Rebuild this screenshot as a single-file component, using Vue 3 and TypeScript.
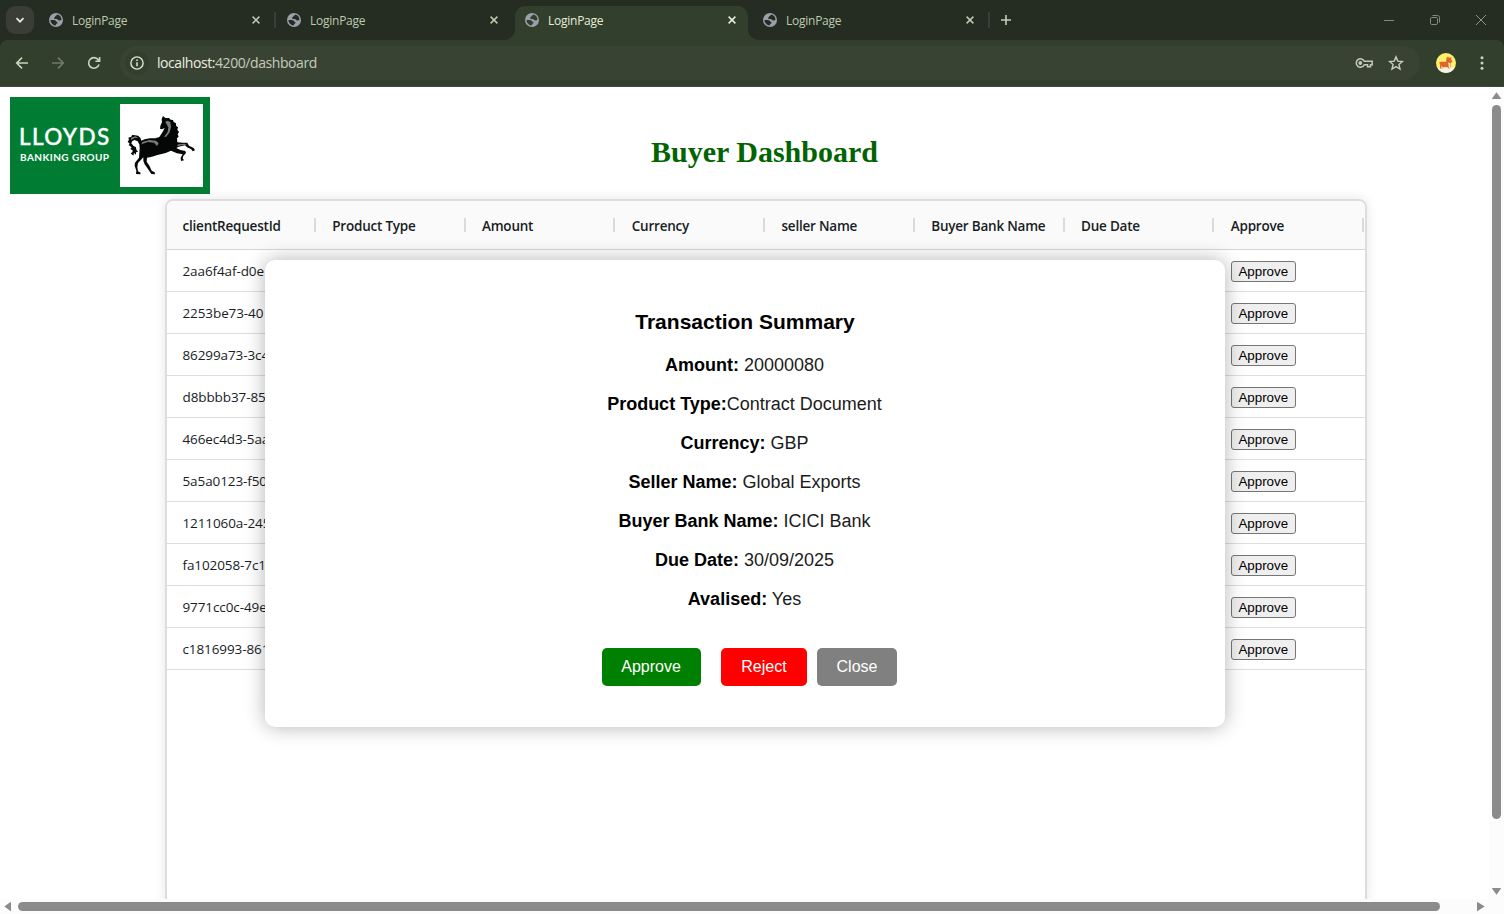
<script setup lang="ts">
interface Tab {
  title: string
  active: boolean
}

const tabs: Tab[] = [
  { title: 'LoginPage', active: false },
  { title: 'LoginPage', active: false },
  { title: 'LoginPage', active: true },
  { title: 'LoginPage', active: false },
]

const columns: string[] = [
  'clientRequestId',
  'Product Type',
  'Amount',
  'Currency',
  'seller Name',
  'Buyer Bank Name',
  'Due Date',
  'Approve',
]

const requestIds: string[] = [
  '2aa6f4af-d0e',
  '2253be73-40',
  '86299a73-3c4',
  'd8bbbb37-85',
  '466ec4d3-5aa',
  '5a5a0123-f50',
  '1211060a-245',
  'fa102058-7c1',
  '9771cc0c-49e',
  'c1816993-861',
]

const summary: { label: string; value: string }[] = [
  { label: 'Amount:', value: ' 20000080' },
  { label: 'Product Type:', value: 'Contract Document' },
  { label: 'Currency:', value: ' GBP' },
  { label: 'Seller Name:', value: ' Global Exports' },
  { label: 'Buyer Bank Name:', value: ' ICICI Bank' },
  { label: 'Due Date:', value: ' 30/09/2025' },
  { label: 'Avalised:', value: ' Yes' },
]
</script>

<template>
  <div class="window">
    <header class="tabstrip">
      <div class="tab-search">
        <svg width="10" height="10" viewBox="0 0 10 10"><path d="M1.5 3.2 5 6.7 8.5 3.2" fill="none" stroke="#e3e8da" stroke-width="1.8" /></svg>
      </div>
      <div v-for="(tab, i) in tabs" :key="i" class="tab" :class="{ active: tab.active, divided: i === 0 || i === 3 }">
        <svg class="globe" width="14" height="14" viewBox="0 0 14 14">
          <circle cx="7" cy="7" r="7" fill="#9aa0a9" />
          <path class="land" d="M8.6 1.6C10.8 2.2 12.4 4.2 12.5 6.6 11.6 7.6 10.5 7.7 9.6 7.2 8.8 6.7 8.6 6 7.6 5.9 6.5 5.8 5.2 6.1 5 5.2 4.9 4.3 6 4.2 6.3 3.5 6.6 2.7 7.4 2.7 8.6 1.6Z" />
          <path class="land" d="M1.5 7.1C3 7 5 6.9 6.4 7.4 7.6 7.9 7.2 9 8.2 9.2 9 9.4 8.8 10.2 8 10.4 7 10.7 7.2 11.8 6.3 12.4 3.6 12.2 1.5 9.8 1.5 7.1Z" />
        </svg>
        <span class="tab-title">{{ tab.title }}</span>
        <svg class="tab-close" width="8" height="8" viewBox="0 0 8 8"><path d="M.6.6 7.4 7.4M7.4.6.6 7.4" fill="none" stroke="currentColor" stroke-width="1.5" /></svg>
      </div>
      <svg class="new-tab" width="12" height="12" viewBox="0 0 12 12"><path d="M6 1V11M1 6H11" stroke="#c4d0b8" stroke-width="1.6" /></svg>
      <div class="controls">
        <svg width="12" height="12" viewBox="0 0 12 12"><path d="M1 6.5H11" stroke="#84897f" /></svg>
        <svg width="12" height="12" viewBox="0 0 12 12" fill="none" stroke="#84897f"><rect x="1.5" y="3.5" width="7" height="7" rx="1.3" /><path d="M3.5 1.5H8.5A2 2 0 0 1 10.500 3.500V8.500" /></svg>
        <svg width="12" height="12" viewBox="0 0 12 12"><path d="M1 1 11 11M11 1 1 11" stroke="#8e9389" /></svg>
      </div>
    </header>

    <div class="toolbar">
      <svg class="nav back" width="14" height="14" viewBox="0 0 14 14" fill="none" stroke="#c9d6bc" stroke-width="1.6"><path d="M13 7H1.8M7 1.600 1.700 7 7 12.400" /></svg>
      <svg class="nav fwd" width="14" height="14" viewBox="0 0 14 14" fill="none" stroke="#71796b" stroke-width="1.6"><path d="M1 7H12.200M7 1.600 12.300 7 7 12.400" /></svg>
      <svg class="nav reload" width="14" height="14" viewBox="0 0 14 14" fill="none" stroke="#c9d6bc" stroke-width="1.600"><path d="M12 8.500A5.300 5.300 0 1 1 11.200 3.800L12.300 5M12.600 1V5.200H8.400" /></svg>
      <div class="omnibox">
        <div class="site-info">
          <svg width="14" height="14" viewBox="0 0 14 14" fill="none" stroke="#dfe5d4" stroke-width="1.4"><circle cx="7" cy="7" r="6.100" /><path d="M7 6.200V10.300M7 3.600V5" stroke-width="1.500" /></svg>
        </div>
        <span class="url"><b>localhost:</b>4200/dashboard</span>
        <svg class="key" width="18" height="12" viewBox="0 0 18 12" fill="none" stroke="#c3cbb8" stroke-width="1.500"><path d="M9.300 4.300A4.200 4.200 0 1 0 9.300 7.700H12.500V9.800H15.500V7.700H17.200V4.300Z" /><circle cx="5.300" cy="6" r="1.900" fill="#c3cbb8" stroke="none" /></svg>
        <svg class="star" width="16" height="16" viewBox="0 0 16 16" fill="none" stroke="#c9d0be" stroke-width="1.400"><path d="M8 1.900 9.800 6.100 14.400 6.500 10.900 9.500 12 14 8 11.600 4 14 5.100 9.500 1.600 6.500 6.200 6.100Z" /></svg>
      </div>
      <svg class="avatar" width="20" height="20" viewBox="0 0 20 20">
        <circle cx="10" cy="10" r="10" fill="#fdf06a" />
        <path d="M1.200 14.600H18.800A10 10 0 0 1 1.200 14.600Z" fill="#f6f3e2" />
        <path d="M3.200 9.200 5 8.800 10.200 8.700 10.500 5 12 3.600 13 5 15.200 4 15.200 7 16.500 8.500 15 10 14.800 12.500 14 15.500H12.300L11.800 14.200 7.500 14 6.800 15.500H3.800L4.200 12Z" fill="#e0652b" />
        <path d="M12.300 9.500 14.600 10 14.200 15.500H12.800ZM5.200 13.500H6.600V15.600H5Z" fill="#f8dfc5" />
      </svg>
      <svg class="menu" width="4" height="14" viewBox="0 0 4 14" fill="#c9d6bc"><circle cx="2" cy="1.800" r="1.500" /><circle cx="2" cy="7" r="1.500" /><circle cx="2" cy="12.200" r="1.500" /></svg>
    </div>

    <div class="viewport">
      <main class="page">
        <div class="masthead">
          <div class="logo">
            <div class="wordmark">
              <span class="lloyds">LLOYDS</span>
              <span class="group">BANKING GROUP</span>
            </div>
            <svg class="horse" width="83" height="83" viewBox="0 18 249 249">
              <path d="M129 54 136 60 147 60 152 65 159 66 161 72 168 76 168 83 174 88 172 95 177 102 173 109 176 116 171 121 172 133 189 134 202 134 207 143 221 150 225 157 218 160 213 153 201 148 195 142 176 146 169 150 181 156 196 159 198 165 190 174 188 181 192 187 183 189 182 179 188 169 171 166 153 158 137 165 112 171 96 176 81 179 80 191 89 205 95 218 104 223 105 229 94 228 88 219 74 199 70 189 70 178 62 187 54 195 52 207 54 220 62 224 61 229 48 228 49 218 44 203 45 194 57 179 58 166 59 150 58 139 53 130 44 126 37 129 34 136 40 143 48 148 49 155 54 161 48 163 48 170 42 165 40 173 32 166 37 163 38 157 31 153 35 148 26 141 29 137 23 131 27 125 25 119 34 116 36 111 45 112 54 113 61 119 64 128 74 124 90 121 106 121 118 117 124 108 130 98 134 90 126 94 120 92 121 84 126 72 125 63Z" fill="#050606" />
              <path d="M136 72 142 68 151 72 153 87 149 103 139 116 132 117 143 101 145 88ZM67 132 88 126 108 128 116 136 111 144 102 134 84 132 64 139ZM174 139 194 137 201 142 188 141 171 145ZM33 119 46 115 55 119 44 120 33 126Z" fill="#777b7b" />
            </svg>
          </div>
          <h1>Buyer Dashboard</h1>
        </div>

        <section class="grid">
          <div class="grid-row grid-head">
            <div v-for="name in columns" :key="name" class="th">{{ name }}</div>
          </div>
          <div v-for="id in requestIds" :key="id" class="grid-row grid-line">
            <div class="td">{{ id }}</div>
            <div class="td last"><button class="row-approve">Approve</button></div>
          </div>
        </section>

        <div class="modal">
          <h2>Transaction Summary</h2>
          <p v-for="item in summary" :key="item.label"><strong>{{ item.label }}</strong>{{ item.value }}</p>
          <div class="actions">
            <button class="action approve">Approve</button>
            <button class="action reject">Reject</button>
            <button class="action close">Close</button>
          </div>
        </div>
      </main>

      <div class="vbar">
        <svg width="9" height="7" viewBox="0 0 9 7"><path d="M4.500 .300 9 6.500Q9 7 8.500 7H.500Q0 7 0 6.500Z" fill="#8b8b8b" /></svg>
        <div class="vthumb"></div>
        <svg class="down" width="9" height="7" viewBox="0 0 9 7"><path d="M4.500 6.700 9 .500Q9 0 8.500 0H.500Q0 0 0 .500Z" fill="#8b8b8b" /></svg>
      </div>
      <div class="hbar">
        <svg width="7" height="9" viewBox="0 0 7 9"><path d="M.300 4.500 6.500 0Q7 0 7 .500V8.500Q7 9 6.500 9Z" fill="#8b8b8b" /></svg>
        <div class="hthumb"></div>
        <svg class="right" width="8" height="9" viewBox="0 0 8 9"><path d="M7.700 4.500 .500 0Q0 0 0 .500V8.500Q0 9 .500 9Z" fill="#8b8b8b" /></svg>
      </div>
    </div>
  </div>
</template>

<style>
body {
  margin: 0;
  overflow: hidden;
}
</style>

<style scoped>
* {
  box-sizing: border-box;
}
svg {
  display: block;
  flex: none;
}
.window {
  display: flex;
  flex-direction: column;
  width: 1504px;
  height: 914px;
  overflow: hidden;
  background: #252c22;
  font-family: 'Open Sans', 'Noto Sans', sans-serif;
}
.tabstrip {
  display: flex;
  height: 40px;
  flex: none;
}
.tab-search {
  display: flex;
  align-items: center;
  justify-content: center;
  width: 28px;
  height: 28px;
  margin: 6px 5px 0 6px;
  border-radius: 9px;
  background: #3a3d36;
}
.tab {
  position: relative;
  display: flex;
  align-items: center;
  width: 233px;
  height: 34px;
  margin: 6px 5px 0 0;
  padding: 0 12px 6px 10px;
  border-radius: 10px 10px 0 0;
  color: #bccbaf;
}
.tab.active {
  background: #333f2d;
  color: #e6ecdc;
}
.tab.active::before,
.tab.active::after {
  content: '';
  position: absolute;
  bottom: 0;
  width: 10px;
  height: 10px;
}
.tab.active::before {
  left: -10px;
  background: radial-gradient(circle at 0 0, transparent 9.5px, #333f2d 10px);
}
.tab.active::after {
  right: -10px;
  background: radial-gradient(circle at 100% 0, transparent 9.5px, #333f2d 10px);
}
.tab.divided::after {
  content: '';
  position: absolute;
  right: -4px;
  top: 6px;
  width: 2px;
  height: 16px;
  background: #3b3e37;
}
.land {
  fill: #252c22;
}
.active .land {
  fill: #333f2d;
}
.tab-title {
  flex: 1;
  margin-left: 9px;
  padding-top: 2px;
  font-size: 12px;
  line-height: 16px;
  letter-spacing: -0.25px;
}
.new-tab {
  margin: 14px 0 0 9px;
}
.controls {
  display: flex;
  gap: 34px;
  margin: 14px 17px 0 auto;
}
.toolbar {
  display: flex;
  align-items: center;
  flex: none;
  height: 47px;
  padding: 0 20px 0 15px;
  border-bottom: 1px solid #3f483a;
  border-radius: 8px 8px 0 0;
  background: #333f2d;
}
.fwd {
  margin-left: 22px;
}
.reload {
  margin-left: 22px;
}
.omnibox {
  display: flex;
  align-items: center;
  width: 1300px;
  height: 34px;
  margin-left: 19px;
  padding: 0 16px 0 5px;
  border-radius: 17px;
  background: #394334;
}
.site-info {
  display: flex;
  align-items: center;
  justify-content: center;
  width: 24px;
  height: 24px;
  border-radius: 12px;
  background: #333f2d;
}
.url {
  flex: 1;
  margin-left: 8px;
  color: #c5ccba;
  font-size: 14px;
  line-height: 20px;
  letter-spacing: -0.43px;
}
.url b {
  color: #eaf0e0;
  font-weight: 400;
}
.star {
  margin-left: 15px;
}
.avatar {
  margin-left: 16px;
}
.menu {
  margin-left: 24px;
}
.viewport {
  display: grid;
  grid-template: 812px 15px / 1489px 15px;
  background: #fcfcfc;
}
.page {
  position: relative;
  overflow: hidden;
  background: #fff;
}
.masthead {
  display: flex;
  height: 112px;
  padding: 10px 0 0 10px;
}
.logo {
  display: flex;
  width: 200px;
  height: 97px;
  padding: 7px 7px 7px 10px;
  background: #007d32;
}
.wordmark {
  display: flex;
  flex-direction: column;
  width: 100px;
  color: #fff;
  font-family: Lato, sans-serif;
  white-space: nowrap;
}
.lloyds {
  margin: 19px 0 0 -1px;
  font-size: 22.5px;
  font-weight: 500;
  line-height: 28px;
  letter-spacing: 1.4px;
  -webkit-text-stroke: 0.4px #fff;
}
.group {
  margin-top: -1px;
  font-size: 10px;
  font-weight: 700;
  line-height: 14px;
  letter-spacing: 0.45px;
}
.horse {
  background: #fff;
}
h1 {
  margin: 38px 0 0 441px;
  color: #006400;
  font: bold 30px/34px 'Liberation Serif', serif;
  white-space: nowrap;
}
.grid {
  width: 1202px;
  height: 706px;
  margin-left: 165px;
  border: 2px solid #dddddd;
  border-radius: 8px;
  box-shadow: 0 0 12px rgba(0, 0, 0, 0.1);
  color: #181d1f;
  overflow: hidden;
}
.grid-row {
  display: flex;
  align-items: center;
}
.grid-head {
  height: 49px;
  border-bottom: 1px solid #d5d5d6;
  background: #fafafa;
}
.grid-line {
  height: 42px;
  border-bottom: 1px solid #dddddd;
}
.th {
  position: relative;
  width: 149.75px;
  padding: 2px 0 0 15.5px;
  font-size: 13.5px;
  font-weight: 600;
  line-height: 20px;
  letter-spacing: -0.22px;
  white-space: nowrap;
}
.th::after {
  content: '';
  position: absolute;
  top: 4px;
  right: 1px;
  width: 2px;
  height: 14px;
  background: #d9dadb;
}
.td {
  padding-left: 15.5px;
  font-size: 13.5px;
  line-height: 20px;
  letter-spacing: -0.1px;
  white-space: nowrap;
}
.td.last {
  width: 149.75px;
  padding-top: 1px;
  margin-left: auto;
}
.row-approve {
  display: block;
  width: 65px;
  height: 21px;
  padding: 0;
  border: 1px solid #767676;
  border-radius: 3px;
  background: #efefef;
  color: #000;
  font: 13.333px/19px 'Liberation Sans', Arial, sans-serif;
}
.modal {
  position: absolute;
  left: 265px;
  top: 172.5px;
  width: 960px;
  height: 467px;
  padding-top: 50px;
  border-radius: 10px;
  background: #fff;
  box-shadow: 0 0 20px rgba(0, 0, 0, 0.3);
  color: #000;
  font-family: 'Liberation Sans', Arial, sans-serif;
  text-align: center;
}
h2 {
  margin: 0 0 21px;
  font-size: 21px;
  line-height: 24px;
}
.modal p {
  margin: 0 0 18px;
  padding-right: 1px;
  color: #1c1c1c;
  font-size: 18px;
  line-height: 21px;
  white-space: pre;
}
.modal p strong {
  color: #000;
}
.actions {
  display: flex;
  margin: 38.5px 0 0 337px;
}
.action {
  height: 38px;
  padding: 0;
  border: 0;
  border-radius: 5px;
  color: #fff;
  font: 16px/18px 'Liberation Sans', Arial, sans-serif;
}
.approve {
  width: 99px;
  padding-right: 1px;
  background: #008000;
}
.reject {
  width: 86px;
  margin-left: 20px;
  background: #ff0000;
}
.close {
  width: 80px;
  margin-left: 10px;
  background: #808080;
}
.vbar {
  display: flex;
  flex-direction: column;
  align-items: center;
  padding: 5px 0 4px;
  background: #fcfcfc;
}
.vthumb {
  width: 9px;
  height: 714px;
  margin-top: 6px;
  border-radius: 5px;
  background: #8b8b8b;
}
.down {
  margin-top: auto;
}
.hbar {
  display: flex;
  align-items: center;
  padding: 0 4px;
  background: #fcfcfc;
}
.hthumb {
  width: 1422px;
  height: 9px;
  margin-left: 7px;
  border-radius: 5px;
  background: #8b8b8b;
}
.right {
  margin-left: auto;
}
</style>
